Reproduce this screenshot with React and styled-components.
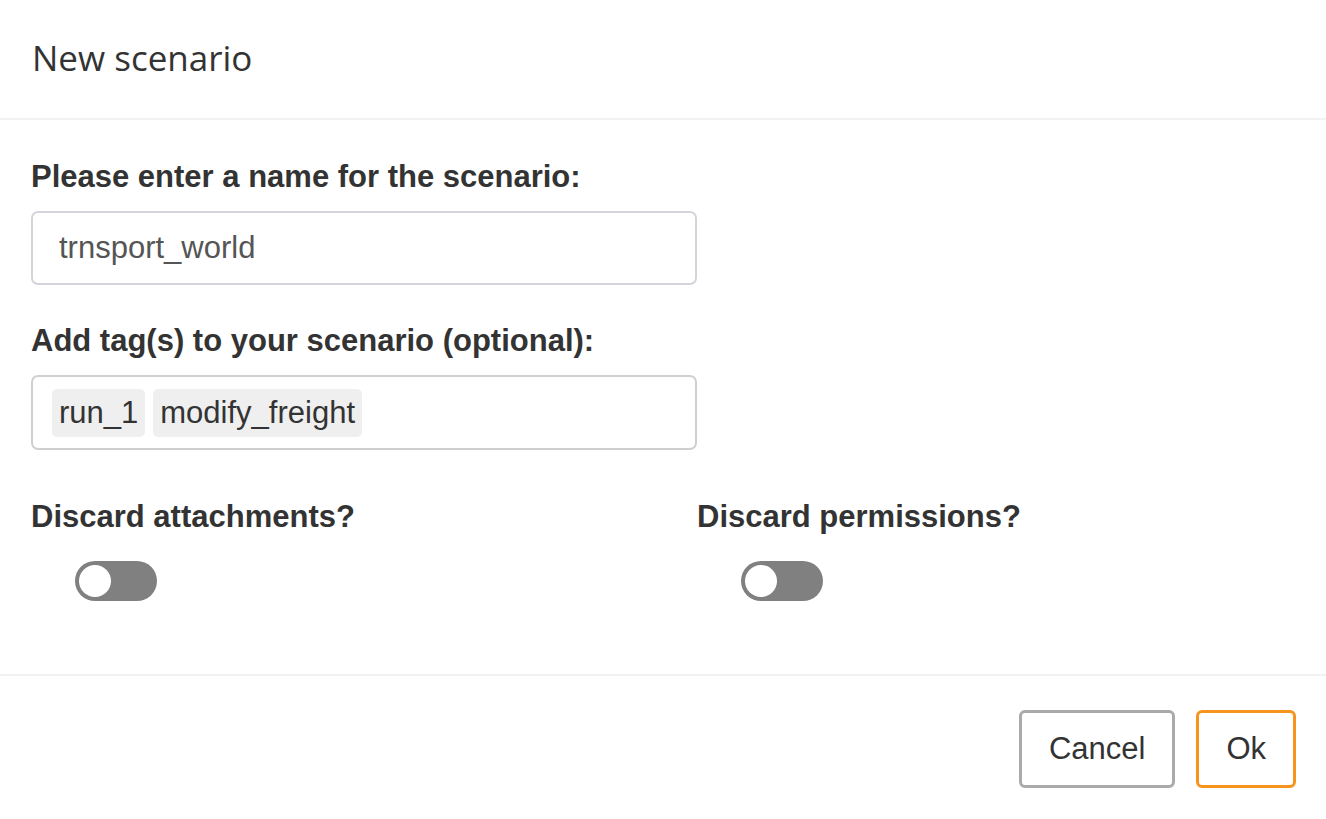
import styled, { createGlobalStyle } from "styled-components"
import { useState } from "react"

const Global = createGlobalStyle`
body {
    margin: 0;
    background: #fff;
    font-family: "Liberation Sans", Arial, sans-serif;
    color: #333;
}
`

export default function App() {
    const [discardAttachments, setDiscardAttachments] = useState(false)
    const [discardPermissions, setDiscardPermissions] = useState(false)
    const tags = ["run_1", "modify_freight"]

    return (
        <>
            <Global />
            <Modal>
                <Header>
                    <Title>New scenario</Title>
                </Header>
                <Body>
                    <Label>Please enter a name for the scenario:</Label>
                    <Input defaultValue="trnsport_world" />
                    <Label>Add tag(s) to your scenario (optional):</Label>
                    <TagBox>
                        {tags.map((t) => <Tag key={t}>{t}</Tag>)}
                    </TagBox>
                    <ToggleRow>
                        <ToggleField>
                            <Label>Discard attachments?</Label>
                            <Switch on={discardAttachments} onClick={() => setDiscardAttachments(!discardAttachments)} />
                        </ToggleField>
                        <ToggleField>
                            <Label>Discard permissions?</Label>
                            <Switch on={discardPermissions} onClick={() => setDiscardPermissions(!discardPermissions)} />
                        </ToggleField>
                    </ToggleRow>
                </Body>
                <Footer>
                    <Button>Cancel</Button>
                    <Button primary>Ok</Button>
                </Footer>
            </Modal>
        </>
    )
}

const Modal = styled.div`
width: 1326px;
height: 819px;
display: flex;
flex-direction: column;
background: #fff;
`

const Header = styled.div`
height: 120px;
box-sizing: border-box;
border-bottom: 2px solid #f2f2f2;
display: flex;
align-items: center;
padding: 0 32px 4px;
`

const Title = styled.h1`
margin: 0;
font-family: "Open Sans", "Noto Sans", sans-serif;
font-weight: 400;
font-size: 35px;
color: #333;
`

const Body = styled.div`
flex: 1;
padding: 40px 31px 0;
box-sizing: border-box;
border-bottom: 2px solid #f2f2f2;
`

const Label = styled.div`
font-weight: 700;
font-size: 31px;
line-height: 34px;
color: #333;
margin-bottom: 17px;
white-space: nowrap;
`

const Input = styled.input`
display: block;
width: 666px;
height: 74px;
box-sizing: border-box;
border: 2px solid #d3d5db;
border-radius: 7px;
padding: 0 26px;
font-family: "Liberation Sans", Arial, sans-serif;
font-size: 31px;
color: #555;
margin: 0 0 39px;
outline: none;
`

const TagBox = styled.div`
width: 666px;
height: 75px;
box-sizing: border-box;
border: 2px solid #cfcfcf;
border-radius: 7px;
padding: 0 19px;
display: flex;
align-items: center;
gap: 8px;
margin-bottom: 50px;
`

const Tag = styled.span`
background: #efefef;
border-radius: 5px;
padding: 0 7px;
height: 48px;
display: flex;
align-items: center;
font-size: 31px;
color: #333;
`

const ToggleRow = styled.div`
display: flex;
`

const ToggleField = styled.div`
width: 666px;
flex-shrink: 0;
display: flex;
flex-direction: column;
`

const Switch = styled.button`
position: relative;
margin: 10px 0 0 44px;
width: 82px;
height: 40px;
border: none;
border-radius: 20px;
background: ${(p) => (p.on ? "#f7941d" : "#808080")};
cursor: pointer;
padding: 0;
&::after {
    content: "";
    position: absolute;
    top: 4px;
    left: ${(p) => (p.on ? "46px" : "4px")};
    width: 32px;
    height: 32px;
    border-radius: 50%;
    background: #fff;
}
`

const Footer = styled.div`
height: 143px;
box-sizing: border-box;
display: flex;
justify-content: flex-end;
align-items: flex-start;
gap: 21px;
padding: 34px 30px 0;
`

const Button = styled.button`
height: 78px;
padding: 0 27px;
box-sizing: border-box;
border: 3px solid ${(p) => (p.primary ? "#f7941d" : "#aaaaaa")};
border-radius: 6px;
background: #fff;
font-family: "Liberation Sans", Arial, sans-serif;
font-size: 31px;
color: #333;
cursor: pointer;
`
